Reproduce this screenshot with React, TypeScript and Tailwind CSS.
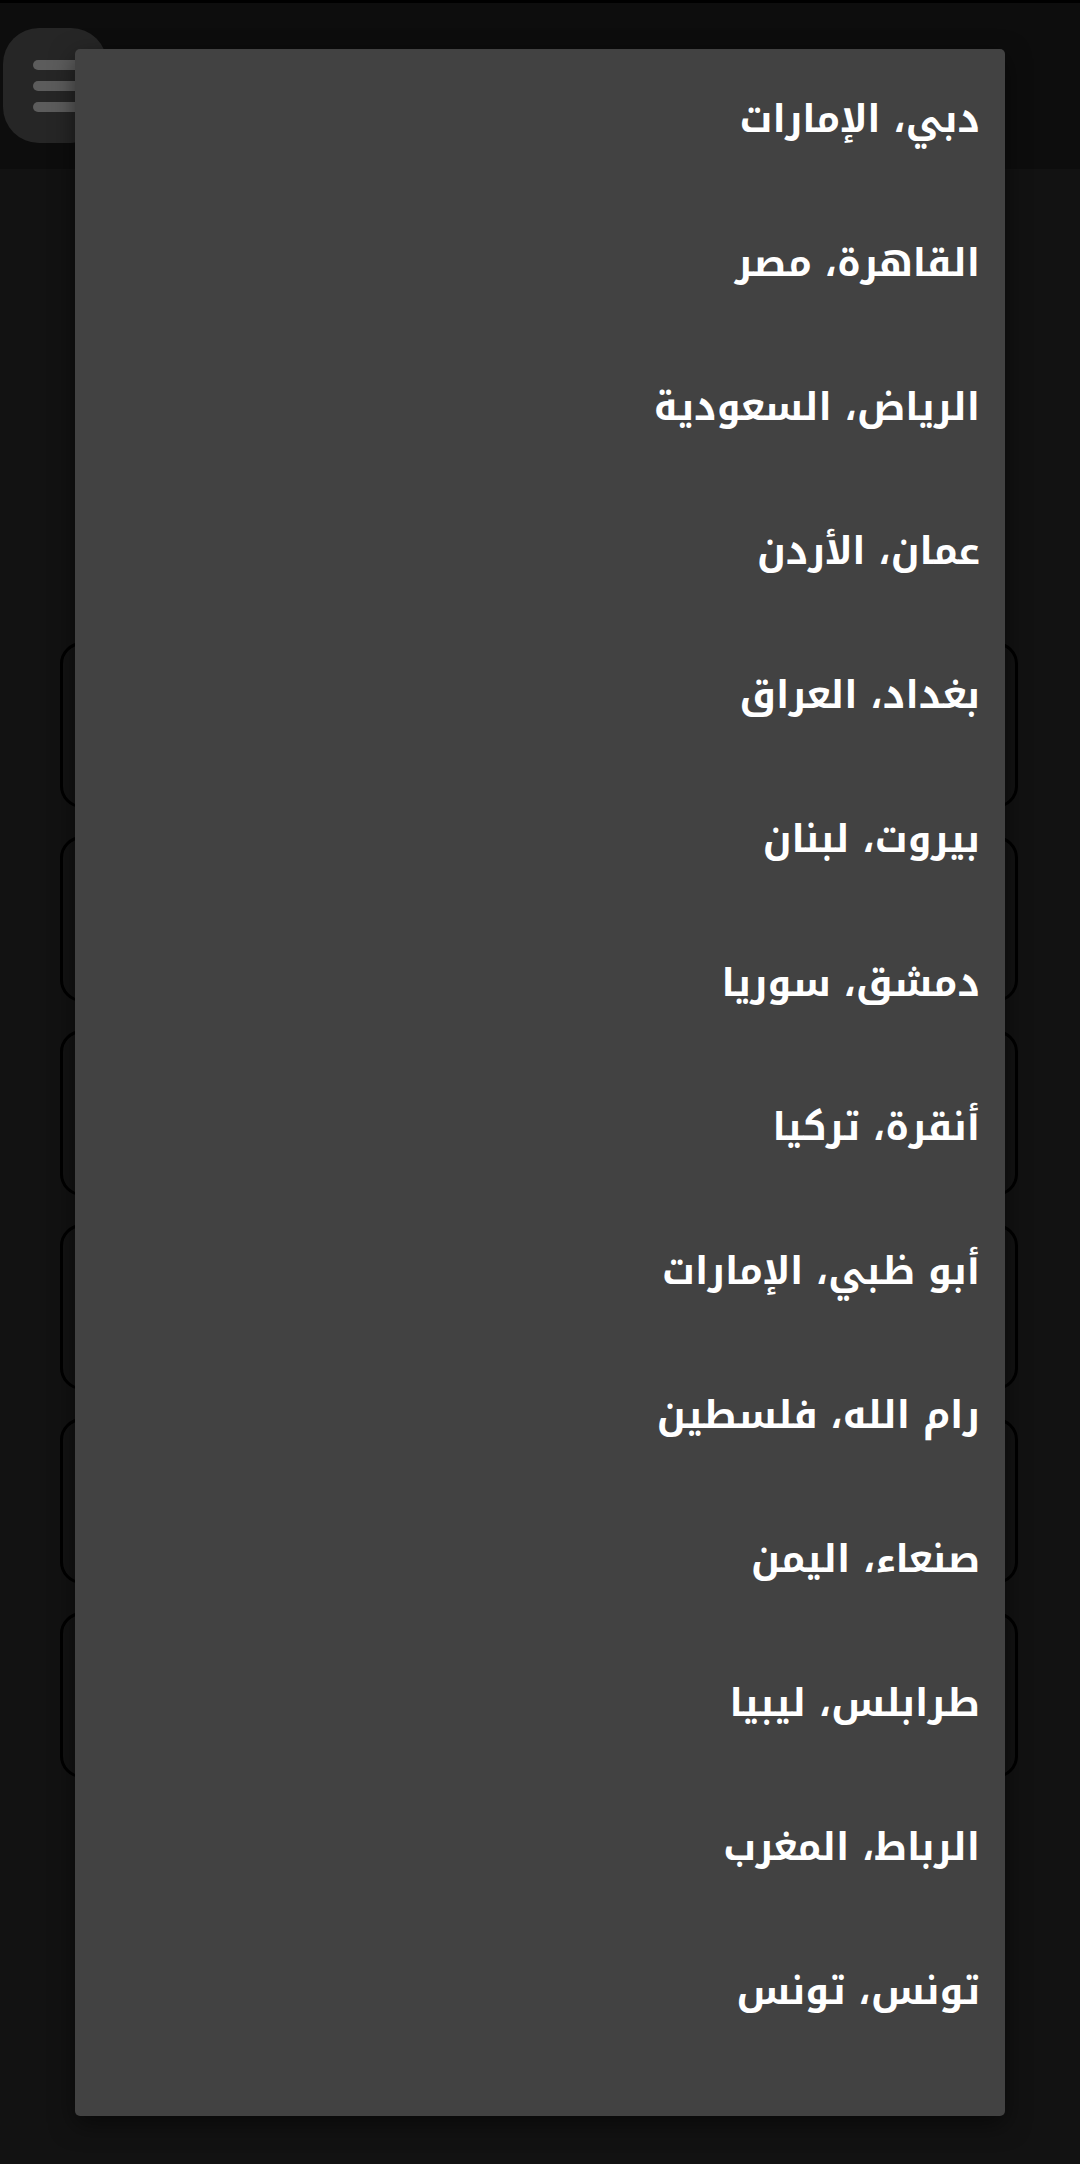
const cities = [
  'دبي، الإمارات',
  'القاهرة، مصر',
  'الرياض، السعودية',
  'عمان، الأردن',
  'بغداد، العراق',
  'بيروت، لبنان',
  'دمشق، سوريا',
  'أنقرة، تركيا',
  'أبو ظبي، الإمارات',
  'رام الله، فلسطين',
  'صنعاء، اليمن',
  'طرابلس، ليبيا',
  'الرباط، المغرب',
  'تونس، تونس',
];

function MenuButton() {
  return (
    <div className="w-[104px] h-[115px] rounded-[36px] bg-[#262626] flex flex-col justify-center gap-[11px] pl-[30px]">
      <div className="w-[70px] h-[10px] rounded-full bg-[#5c5c5c]" />
      <div className="w-[70px] h-[10px] rounded-full bg-[#5c5c5c]" />
      <div className="w-[70px] h-[10px] rounded-full bg-[#5c5c5c]" />
    </div>
  );
}

export default function App() {
  return (
    <div
      className="relative w-[1080px] h-[2164px] overflow-hidden bg-[#121212]"
      style={{ fontFamily: '"Noto Kufi Arabic", "Droid Arabic Kufi", "Noto Sans Arabic", "DejaVu Sans", sans-serif' }}
    >
      {/* Header */}
      <div className="h-[3px] bg-black" />
      <div className="h-[166px] bg-[#0d0d0d] pl-[3px] pt-[25px]">
        <MenuButton />
      </div>

      {/* Background cards */}
      <div className="flex flex-col gap-[28px] pl-[60px] pr-[62px] pt-[473px]">
        {[0, 1, 2, 3, 4, 5].map((i) => (
          <div key={i} className="h-[166px] rounded-[22px] border-[3px] border-black bg-[#131313]" />
        ))}
      </div>

      {/* Dropdown */}
      <div
        dir="rtl"
        className="absolute left-[75px] top-[49px] w-[930px] h-[2067px] rounded-[5px] bg-[#424242] shadow-[0_8px_24px_rgba(0,0,0,0.5)]"
      >
        {cities.map((c) => (
          <div key={c} className="h-[144px] flex items-center pr-[25px] pb-[4px] text-white text-[38px] font-bold">
            {c}
          </div>
        ))}
      </div>
    </div>
  );
}
